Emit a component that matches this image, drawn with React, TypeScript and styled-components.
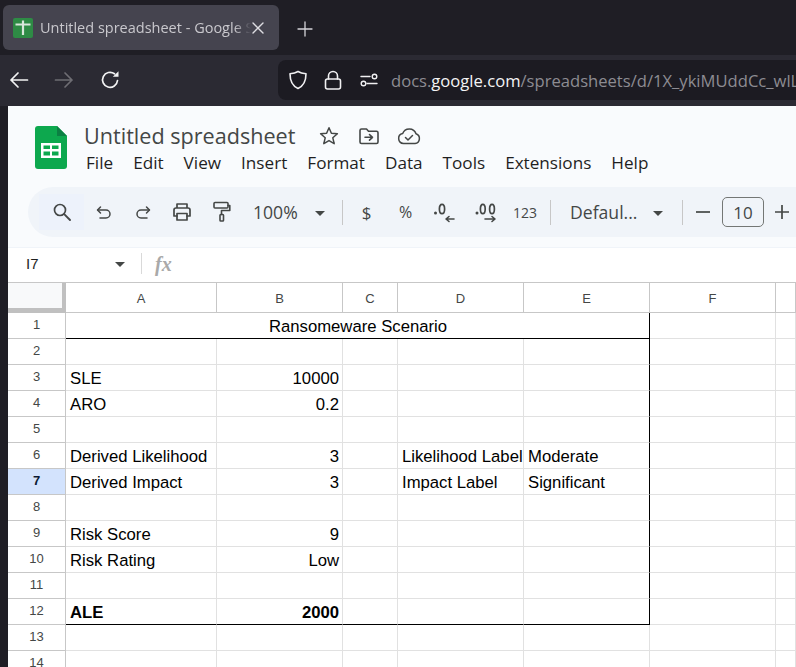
import React from "react";
import styled, { createGlobalStyle } from "styled-components";

const Global = createGlobalStyle`
  html, body { margin: 0; padding: 0; background: #1f1e25; overflow: hidden; }
  * { box-sizing: border-box; }
`;

const Shell = styled.div`
  width: 796px; height: 667px; overflow: hidden; display: flex; flex-direction: column;
  background: #1f1e25; font-family: "Open Sans", sans-serif;
`;
const TabStrip = styled.div`
  height: 55px; flex: none; background: #1f1e25; display: flex; align-items: flex-start; padding: 5px 0 0 3px;
`;
const Tab = styled.div`
  width: 276px; height: 45px; background: #45444f; border-radius: 6px; display: flex; align-items: center; padding-left: 10px; flex: none;
`;
const Favicon = styled.div`
  width: 20px; height: 20px; background: #2e8b45; border-radius: 2px; flex: none; display: flex; align-items: center; justify-content: center;
`;
const TabTitle = styled.div`
  margin-left: 7px; width: 211px; flex: none; overflow: hidden; white-space: nowrap; font-size: 14.5px; color: #c9c8cd;
  -webkit-mask-image: linear-gradient(90deg, #000 92%, transparent 100%);
  mask-image: linear-gradient(90deg, #000 92%, transparent 100%);
`;
const TabClose = styled.div`
  margin-left: -1px; display: flex; color: #dedde2;
`;
const NewTab = styled.div`
  margin: 16px 0 0 18px; display: flex; color: #d5d4d9;
`;
const NavBar = styled.div`
  height: 51px; flex: none; background: #2b2a33; display: flex; align-items: center; padding: 0 0 1px 0;
`;
const NavButton = styled.div<{ $w: number; $dim?: boolean }>`
  width: ${p => p.$w}px; flex: none; display: flex; justify-content: center; color: ${p => (p.$dim ? "#6e6d73" : "#f3f3f4")};
`;
const UrlBar = styled.div`
  margin-left: 149px; flex: 1; min-width: 0; height: 40px; background: #1c1b22; border-radius: 8px 0 0 8px; display: flex; align-items: center; padding-left: 8px; overflow: hidden; color: #f0f0f2;
`;
const UrlIcon = styled.div<{ $w: number }>`
  width: ${p => p.$w}px; flex: none; display: flex; justify-content: center;
`;
const UrlText = styled.div`
  margin-left: 9px; white-space: nowrap; font-size: 16.6px; color: #8d8c92;
  b { font-weight: 400; color: #f4f4f5; }
`;
const Page = styled.div`
  flex: 1; min-height: 0; margin-left: 8px; background: #fff; display: flex; flex-direction: column; overflow: hidden;
`;
const DocHeader = styled.div`
  height: 81px; flex: none; background: #f9fbfd; display: flex; padding: 20px 0 0 27px;
`;
const LogoMark = styled.svg`
  flex: none;
`;
const DocInfo = styled.div`
  margin: -2px 0 0 17px; display: flex; flex-direction: column;
`;
const TitleRow = styled.div`
  display: flex; align-items: center; height: 24px;
`;
const DocTitle = styled.div`
  font-size: 21.6px; color: #444746; white-space: nowrap; width: 225px; line-height: 24px;
`;
const DocIcon = styled.div`
  width: 40px; flex: none; display: flex; justify-content: center; color: #444746;
`;
const MenuBar = styled.div`
  display: flex; gap: 20px; margin: 2px 0 0 2px;
`;
const MenuItem = styled.span`
  font-size: 17.15px; line-height: 26px; color: #1f1f1f;
`;
const ToolbarArea = styled.div`
  height: 60px; flex: none; background: #f9fbfd; padding: 0 0 10px 20px; overflow: hidden;
`;
const Toolbar = styled.div`
  width: 800px; height: 50px; background: #f0f4f9; border-radius: 25px; display: flex; align-items: center; padding-left: 11px; color: #444746;
`;
const ToolButton = styled.div<{ $w: number; $lit?: boolean }>`
  width: ${p => p.$w}px; flex: none; display: flex; align-items: center; justify-content: center; height: 36px; color: #444746;
  background: ${p => (p.$lit ? "#edf2fb" : "transparent")};
`;
const ToolGlyph = styled(ToolButton)<{ $size: number }>`
  font-size: ${p => p.$size}px; font-weight: 500;
`;
const ToolLabel = styled.div<{ $w: number; $ml: number }>`
  width: ${p => p.$w}px; margin-left: ${p => p.$ml}px; flex: none; font-size: 17.6px; color: #444746; white-space: nowrap; display: flex; align-items: center; justify-content: space-between;
`;
const ToolSep = styled.div<{ $ml: number }>`
  width: 1px; height: 25px; flex: none; background: #c7c7c7; margin-left: ${p => p.$ml}px;
`;
const Caret = styled.span`
  width: 0; height: 0; flex: none; margin-top: 2px;
  border-left: 5px solid transparent; border-right: 5px solid transparent; border-top: 5px solid #444746;
`;
const FontSizeBox = styled.div`
  width: 42px; height: 30px; flex: none; border: 1px solid #747775; border-radius: 5px; font-size: 17px; color: #444746; display: flex; align-items: center; justify-content: center;
`;
const FormulaBar = styled.div`
  height: 35px; flex: none; background: #fff; border-top: 1px solid #f0f4f9; display: flex; align-items: center; padding-bottom: 3px;
`;
const NameBox = styled.div`
  width: 117px; padding-left: 18px; font-family: "Liberation Sans", Arial, sans-serif; font-size: 15px; color: #1f1f1f; display: flex; align-items: center; justify-content: space-between;
`;
const FormulaSep = styled.div`
  width: 1px; height: 21px; background: #d9d9d9; margin-left: 16px;
`;
const FxLabel = styled.span`
  margin-left: 13px; font-family: "Liberation Serif", serif; font-style: italic; font-weight: 700; font-size: 20px; color: #a9a9a9; line-height: 20px;
`;
const Grid = styled.div`
  flex: 1; min-height: 0; display: grid; grid-template-columns: 58px 151px 126px 55px 126px 126px 126px 20px; grid-auto-rows: 26px; align-content: start;
  border-top: 1px solid #c7c7c7; font-family: "Liberation Sans", Arial, sans-serif; overflow: hidden;
  grid-template-rows: 30px;
`;
const Corner = styled.div`
  background: #f8f9fa; border-right: 4px solid #c0c0c0; border-bottom: 5px solid #c0c0c0;
`;
const ColHead = styled.div`
  border-right: 1px solid #c7c7c7; border-bottom: 1px solid #c7c7c7; background: #fff; display: flex; align-items: center; justify-content: center; font-size: 13px; color: #444746; padding-top: 1px;
`;
const RowHead = styled.div<{ $active?: boolean }>`
  border-right: 1px solid #c7c7c7; border-bottom: 1px solid #c7c7c7; background: ${p => (p.$active ? "#d3e3fd" : "#fff")};
  display: flex; align-items: center; justify-content: center; font-size: 13px; padding-bottom: 2px;
  color: ${p => (p.$active ? "#0b1a33" : "#444746")}; font-weight: ${p => (p.$active ? 700 : 400)};
`;
const Cell = styled.div<{ $right?: boolean; $bold?: boolean; $span?: number; $edge?: boolean; $under?: boolean; $center?: boolean }>`
  ${p => (p.$span ? `grid-column: span ${p.$span};` : "")}
  border-right: 1px solid ${p => (p.$edge ? "#000" : "#e1e1e1")};
  border-bottom: 1px solid ${p => (p.$under ? "#000" : "#e1e1e1")};
  display: flex; align-items: center; padding: 2px 3px 0 4px; white-space: nowrap; overflow: hidden;
  justify-content: ${p => (p.$center ? "center" : p.$right ? "flex-end" : "flex-start")};
  font-size: 16.7px; color: #000; font-weight: ${p => (p.$bold ? 700 : 400)};
`;

const S = { fill: "none", stroke: "currentColor", strokeLinecap: "round" as const, strokeLinejoin: "round" as const };

const rows: { a?: string; b?: string; d?: string; e?: string; bold?: boolean }[] = [
  {},
  { a: "SLE", b: "10000" },
  { a: "ARO", b: "0.2" },
  {},
  { a: "Derived Likelihood", b: "3", d: "Likelihood Label", e: "Moderate" },
  { a: "Derived Impact", b: "3", d: "Impact Label", e: "Significant" },
  {},
  { a: "Risk Score", b: "9" },
  { a: "Risk Rating", b: "Low" },
  {},
  { a: "ALE", b: "2000", bold: true },
];
const columns = ["A", "B", "C", "D", "E", "F", ""];
const menus = ["File", "Edit", "View", "Insert", "Format", "Data", "Tools", "Extensions", "Help"];

export default function App() {
  return (
    <Shell>
      <Global />
      <TabStrip>
        <Tab>
          <Favicon>
            <svg width="16" height="16" viewBox="0 0 16 16"><path d="M0.500 4.500h15M8 0.500v14.500" stroke="#d8e6da" strokeWidth="2.200" fill="none" /></svg>
          </Favicon>
          <TabTitle>Untitled spreadsheet - Google Sheets</TabTitle>
          <TabClose>
            <svg width="16" height="16" viewBox="0 0 16 16"><path d="M3 3l10 10M13 3L3 13" {...S} strokeWidth="1.400" /></svg>
          </TabClose>
        </Tab>
        <NewTab>
          <svg width="16" height="16" viewBox="0 0 16 16"><path d="M8 1v14M1 8h14" {...S} strokeWidth="1.300" /></svg>
        </NewTab>
      </TabStrip>
      <NavBar>
        <NavButton $w={38}>
          <svg width="20" height="18" viewBox="0 0 20 18"><path d="M18.500 9H2M9 2L2 9l7 7" {...S} strokeWidth="1.700" /></svg>
        </NavButton>
        <NavButton $w={52} $dim>
          <svg width="20" height="18" viewBox="0 0 20 18"><path d="M1.500 9H18M11 2l7 7-7 7" {...S} strokeWidth="1.700" /></svg>
        </NavButton>
        <NavButton $w={39}>
          <svg width="20" height="20" viewBox="0 0 20 20"><path d="M17.500 10.500A7.500 7.500 0 1 1 14.500 3.800" {...S} strokeWidth="1.700" /><path d="M12.800 6.800h5.700V1.200z" fill="currentColor" /></svg>
        </NavButton>
        <UrlBar>
          <UrlIcon $w={24}>
            <svg width="20" height="20" viewBox="0 0 20 20"><path d="M10 1.500c2.300 1.400 5 2 8 2.300 0 7-2 12-8 14.700C4 15.800 2 10.800 2 3.800c3-.3 5.700-.9 8-2.300z" {...S} strokeWidth="1.600" /></svg>
          </UrlIcon>
          <UrlIcon $w={46}>
            <svg width="18" height="20" viewBox="0 0 18 20"><rect x="1.500" y="9" width="15" height="10" rx="2" {...S} strokeWidth="1.600" /><path d="M4.500 9V6a4.500 4.500 0 0 1 9 0v3" {...S} strokeWidth="1.600" /></svg>
          </UrlIcon>
          <UrlIcon $w={26}>
            <svg width="18" height="14" viewBox="0 0 18 14"><path d="M1 3.500h9M7 10.500h10" {...S} strokeWidth="1.400" /><circle cx="14.500" cy="3.500" r="2.300" {...S} strokeWidth="1.400" /><circle cx="3.500" cy="10.500" r="2.300" {...S} strokeWidth="1.400" /></svg>
          </UrlIcon>
          <UrlText>docs.<b>google.com</b>/spreadsheets/d/1X_ykiMUddCc_wlL</UrlText>
        </UrlBar>
      </NavBar>
      <Page>
        <DocHeader>
          <LogoMark width="32" height="43" viewBox="0 0 32 43">
            <path d="M3 0h19l10 10v30a3 3 0 0 1-3 3H3a3 3 0 0 1-3-3V3a3 3 0 0 1 3-3z" fill="#0da84e" />
            <path d="M22 0l10 10H22z" fill="#0b8043" />
            <path d="M6 17h20v15H6z" fill="#fff" />
            <path d="M8.500 19.500h6.500v3.500H8.500zM17 19.500h6.500v3.500H17zM8.500 25.500h6.500v4H8.500zM17 25.500h6.500v4H17z" fill="#0da84e" />
          </LogoMark>
          <DocInfo>
            <TitleRow>
              <DocTitle>Untitled spreadsheet</DocTitle>
              <DocIcon>
                <svg width="20" height="20" viewBox="0 0 20 20"><path d="M10 1.800l2.400 5.500 6 .5-4.600 4 1.400 5.900L10 14.600l-5.200 3.100 1.400-5.900-4.600-4 6-.5z" {...S} strokeWidth="1.500" /></svg>
              </DocIcon>
              <DocIcon>
                <svg width="20" height="18" viewBox="0 0 20 18"><path d="M1 3.500A1.500 1.500 0 0 1 2.500 2h5l2 2.200h8A1.500 1.500 0 0 1 19 5.700v9.300a1.500 1.500 0 0 1-1.500 1.500h-15A1.500 1.500 0 0 1 1 15z" {...S} strokeWidth="1.600" /><path d="M6 10.300h7.500M10.500 7.500l3 2.800-3 2.800" {...S} strokeWidth="1.600" /></svg>
              </DocIcon>
              <DocIcon>
                <svg width="24" height="18" viewBox="0 0 24 18"><path d="M6.500 16.500a5 5 0 0 1-.8-9.900A7 7 0 0 1 19 6.800a5 5 0 0 1-1 9.700z" {...S} strokeWidth="1.500" /><path d="M8.500 10.500l2.500 2.500 4.500-4.500" {...S} strokeWidth="1.500" /></svg>
              </DocIcon>
            </TitleRow>
            <MenuBar>
              {menus.map(m => <MenuItem key={m}>{m}</MenuItem>)}
            </MenuBar>
          </DocInfo>
        </DocHeader>
        <ToolbarArea>
          <Toolbar>
            <ToolButton $w={45} $lit>
              <svg width="20" height="20" viewBox="0 0 20 20"><circle cx="8" cy="8" r="5.500" {...S} strokeWidth="1.700" /><path d="M12.200 12.200L18 18" {...S} strokeWidth="1.900" /></svg>
            </ToolButton>
            <ToolButton $w={39}>
              <svg width="18" height="18" viewBox="0 0 18 18"><path d="M5.500 4L2.500 7l3 3" {...S} strokeWidth="1.500" /><path d="M3 7h8a4 4 0 0 1 0 8H5" {...S} strokeWidth="1.500" /></svg>
            </ToolButton>
            <ToolButton $w={39}>
              <svg width="18" height="18" viewBox="0 0 18 18"><path d="M12.500 4l3 3-3 3" {...S} strokeWidth="1.500" /><path d="M15 7H7a4 4 0 0 0 0 8h6" {...S} strokeWidth="1.500" /></svg>
            </ToolButton>
            <ToolButton $w={40}>
              <svg width="20" height="20" viewBox="0 0 20 20"><path d="M5 6V2h10v4M5 14H2V8a2 2 0 0 1 2-2h12a2 2 0 0 1 2 2v6h-3" {...S} strokeWidth="1.700" /><path d="M5 11.500h10V18H5z" {...S} strokeWidth="1.700" /></svg>
            </ToolButton>
            <ToolButton $w={39}>
              <svg width="20" height="22" viewBox="0 0 20 22"><rect x="2" y="1.500" width="14" height="5.500" rx="1" {...S} strokeWidth="1.600" /><path d="M16 4.500h1.800v5H9.500v4" {...S} strokeWidth="1.600" /><rect x="8" y="13.500" width="3.500" height="6.500" rx=".8" {...S} strokeWidth="1.600" /></svg>
            </ToolButton>
            <ToolLabel $w={72} $ml={12}>100%<Caret /></ToolLabel>
            <ToolSep $ml={17} />
            <ToolGlyph $w={47} $size={17}>$</ToolGlyph>
            <ToolGlyph $w={31} $size={16}>%</ToolGlyph>
            <ToolButton $w={45}>
              <svg width="24" height="24" viewBox="0 0 24 24"><circle cx="3.500" cy="13" r="1.500" fill="currentColor" /><ellipse cx="10" cy="9" rx="2.600" ry="4.700" {...S} strokeWidth="1.700" /><path d="M22 19H14M17 16.500L14 19l3 2.500" {...S} strokeWidth="1.600" /></svg>
            </ToolButton>
            <ToolButton $w={40}>
              <svg width="24" height="24" viewBox="0 0 24 24"><circle cx="3" cy="13" r="1.500" fill="currentColor" /><ellipse cx="8.800" cy="9" rx="2.400" ry="4.700" {...S} strokeWidth="1.700" /><ellipse cx="18" cy="9" rx="2.400" ry="4.700" {...S} strokeWidth="1.700" /><path d="M11 19h10M18 16.500l3 2.500-3 2.500" {...S} strokeWidth="1.600" /></svg>
            </ToolButton>
            <ToolGlyph $w={38} $size={14}>123</ToolGlyph>
            <ToolSep $ml={6} />
            <ToolLabel $w={93} $ml={19}>Defaul...<Caret /></ToolLabel>
            <ToolSep $ml={19} />
            <ToolButton $w={39}>
              <svg width="14" height="14" viewBox="0 0 14 14"><path d="M0 7h14" stroke="currentColor" strokeWidth="1.700" /></svg>
            </ToolButton>
            <FontSizeBox>10</FontSizeBox>
            <ToolButton $w={36}>
              <svg width="14" height="14" viewBox="0 0 14 14"><path d="M0 7h14M7 0v14" stroke="currentColor" strokeWidth="1.700" /></svg>
            </ToolButton>
          </Toolbar>
        </ToolbarArea>
        <FormulaBar>
          <NameBox>I7<Caret /></NameBox>
          <FormulaSep />
          <FxLabel>fx</FxLabel>
        </FormulaBar>
        <Grid>
          <Corner />
          {columns.map((c, i) => <ColHead key={i}>{c}</ColHead>)}
          <RowHead>1</RowHead>
          <Cell $span={5} $center $edge $under>Ransomeware Scenario</Cell>
          <Cell /><Cell />
          {rows.map((r, i) => {
            const last = i === rows.length - 1;
            return (
              <React.Fragment key={i}>
                <RowHead $active={i === 5}>{i + 2}</RowHead>
                <Cell $bold={r.bold} $under={last}>{r.a}</Cell>
                <Cell $right $bold={r.bold} $under={last}>{r.b}</Cell>
                <Cell $under={last} />
                <Cell $under={last}>{r.d}</Cell>
                <Cell $edge $under={last}>{r.e}</Cell>
                <Cell /><Cell />
              </React.Fragment>
            );
          })}
          {[13, 14].map(n => (
            <React.Fragment key={n}>
              <RowHead>{n}</RowHead>
              <Cell /><Cell /><Cell /><Cell /><Cell /><Cell /><Cell />
            </React.Fragment>
          ))}
        </Grid>
      </Page>
    </Shell>
  );
}
